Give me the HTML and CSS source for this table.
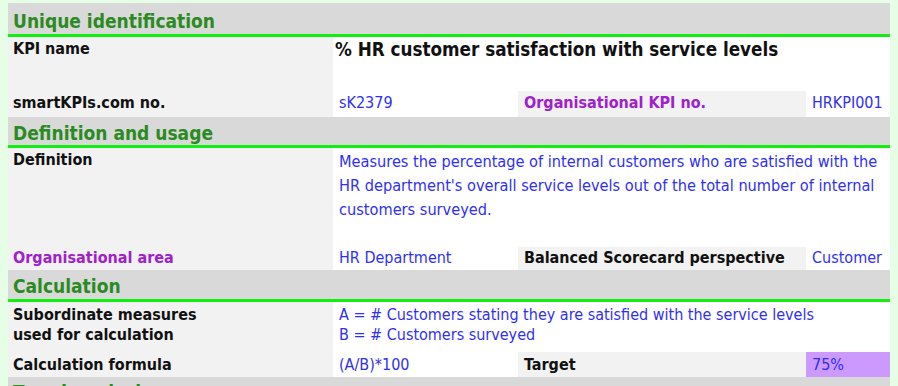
FILE: index.html
```html
<!DOCTYPE html>
<html lang="en">
<head>
<meta charset="utf-8">
<title>KPI sheet</title>
<link rel="stylesheet" href="styles.css">
</head>
<body>
<div class="sheet">
  <div class="sec sec-1">Unique identification</div>

  <div class="lab lab-name">KPI name</div>
  <div class="title">% HR customer satisfaction with service levels</div>
  <div class="lab r-no">smartKPIs.com no.</div>
  <div class="val r-no">sK2379</div>
  <div class="lab2 r-no purple">Organisational KPI no.</div>
  <div class="val r-no">HRKPI001</div>

  <div class="sec sec-2">Definition and usage</div>

  <div class="lab lab-def">Definition</div>
  <div class="val val-def">Measures the percentage of internal customers who are satisfied with the<br>HR department's overall service levels out of the total number of internal<br>customers surveyed.</div>
  <div class="lab r-area purple">Organisational area</div>
  <div class="val r-area">HR Department</div>
  <div class="lab2 r-area">Balanced Scorecard perspective</div>
  <div class="val r-area">Customer</div>

  <div class="sec sec-3">Calculation</div>

  <div class="lab r-sub">Subordinate measures<br>used for calculation</div>
  <div class="val val-sub r-sub">A = # Customers stating they are satisfied with the service levels<br>B = # Customers surveyed</div>
  <div class="lab r-form">Calculation formula</div>
  <div class="val r-form">(A/B)*100</div>
  <div class="lab2 r-form">Target</div>
  <div class="val r-form target">75%</div>

  <div class="sec sec-4">Trend analysis</div>
</div>
</body>
</html>
```

FILE: styles.css
```css
html, body {
  margin: 0;
  padding: 0;
}

body {
  background: #e6fde6;
  height: 386px;
  overflow: hidden;
  padding: 3px 8px 0 8px;
  box-sizing: border-box;
  font-family: "DejaVu Sans Condensed", "DejaVu Sans", sans-serif;
  font-stretch: condensed;
  font-size: 16px;
  line-height: 20px;
  color: #111;
}

.sheet {
  width: 882px;
  display: grid;
  grid-template-columns: 325px 185px 288px 84px;
  background: #ffffff;
}

.sec {
  grid-column: 1 / 5;
  background: #d9d9d9;
  color: #2b8a22;
  font-size: 19px;
  font-weight: bold;
  line-height: 24px;
  padding-left: 5px;
  border-bottom: 3px solid #11ee11;
  box-sizing: content-box;
}

.sec-1 { height: 25px; padding-top: 6px; }
.sec-2 { height: 24px; padding-top: 4px; }
.sec-3 { height: 25px; padding-top: 4px; }
.sec-4 { height: 24px; padding-top: 3px; border-bottom: 0; }

.lab {
  grid-column: 1;
  background: #f2f2f2;
  font-weight: bold;
  padding-left: 5px;
}

.lab2 {
  background: #f2f2f2;
  font-weight: bold;
  padding-left: 6px;
}

.val {
  color: #2f2ff5;
  padding-left: 6px;
}

.purple {
  color: #a020cc;
}

.lab-name {
  height: 52px;
  padding-top: 2px;
}

.title {
  grid-column: 2 / 5;
  height: 52px;
  padding: 2px 0 0 2px;
  font-weight: bold;
  font-size: 18.7px;
  line-height: 22px;
  color: #111;
}

.r-no {
  height: 24px;
  padding-top: 2px;
}

.lab-def {
  height: 97px;
  padding-top: 2px;
}

.val-def {
  grid-column: 2 / 5;
  height: 97px;
  padding-top: 2px;
  line-height: 24px;
  font-size: 16.2px;
}

.r-area {
  height: 22px;
  padding-top: 1px;
}

.r-sub {
  height: 47px;
  padding-top: 3px;
}

.val-sub {
  grid-column: 2 / 5;
}

.r-form {
  height: 22px;
  padding-top: 3px;
}

.target {
  background: #cc99ff;
}
```
